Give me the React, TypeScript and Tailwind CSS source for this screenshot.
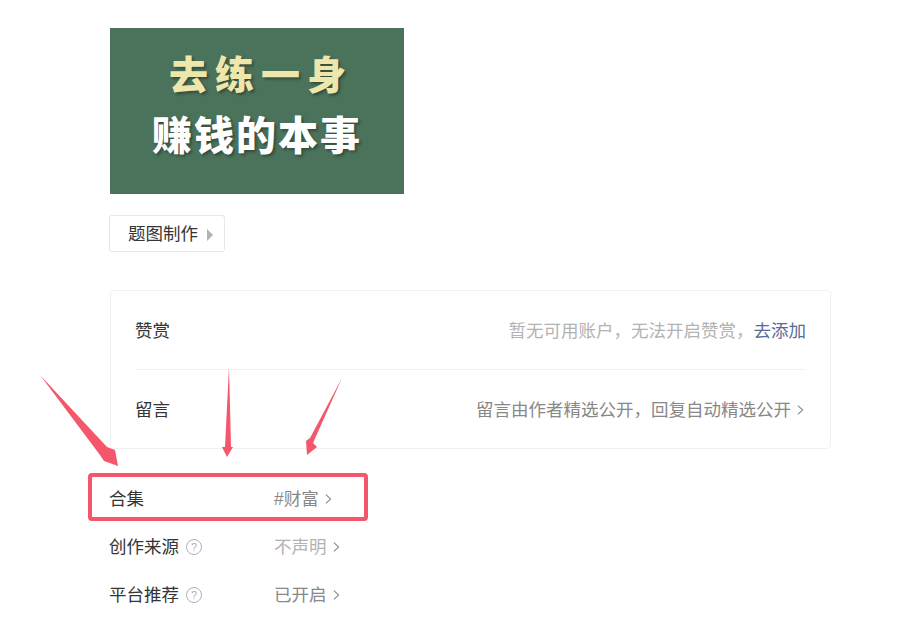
import React from 'react';

const Chevron = ({ className = '' }: { className?: string }) => (
  <svg viewBox="0 0 8 12" className={`w-[7px] h-[12px] ${className}`} fill="none" stroke="currentColor" strokeWidth="1.2">
    <path d="M1 1l5.5 5L1 11" />
  </svg>
);

const Help = () => (
  <span className="ml-[7px] w-[16px] h-[16px] rounded-full border border-[#b2b2b2] text-[#b2b2b2] text-[11px] leading-[14px] text-center">?</span>
);

const Row = ({ label, help, value, dim }: { label: string; help?: boolean; value: string; dim?: boolean }) => (
  <div className="flex items-center h-[48px] pt-[2px]">
    <div className="w-[165px] flex items-center text-[#353535]">
      {label}
      {help && <Help />}
    </div>
    <div className={`flex items-center gap-[6px] ${dim ? 'text-[#b2b2b2]' : 'text-[#888888]'}`}>
      {value}
      <Chevron className="text-[#888888]" />
    </div>
  </div>
);

export default function App() {
  return (
    <div className="relative w-[914px] h-[643px] overflow-hidden bg-white pl-[110px] pt-[28px] text-[17.5px] font-['Liberation_Sans','Noto_Sans_CJK_SC',sans-serif]">
      {/* 封面 */}
      <div className="w-[294px] h-[166px] bg-[#4b735b] flex flex-col items-center font-black">
        <div className="mt-[24px] ml-[8px] text-[39px] leading-[48px] tracking-[7px] text-[#efe6ab] [text-shadow:2px_2px_3px_rgba(0,0,0,0.35)]">去练一身</div>
        <div className="mt-[12px] text-[40px] leading-[48px] tracking-[2px] text-white [text-shadow:2px_2px_3px_rgba(0,0,0,0.35)]">赚钱的本事</div>
      </div>

      <div className="mt-[21px] -ml-[1px] w-[116px] h-[37px] border border-[#e7e7e7] rounded-[3px] flex items-center pl-[18px] pt-[2px] gap-[9px] text-[#353535]">
        题图制作
        <span className="w-0 h-0 border-y-[6px] border-y-transparent border-l-[6px] border-l-[#b2b2b2]" />
      </div>

      {/* 赞赏 / 留言 */}
      <div className="mt-[38px] w-[721px] h-[159px] border border-[#f0f0f0] rounded-[4px] px-[24px]">
        <div className="h-[79px] flex items-center justify-between border-b border-[#f2f2f2] pt-[2px]">
          <span className="text-[#353535]">赞赏</span>
          <span className="text-[#b2b2b2]">暂无可用账户，无法开启赞赏，<span className="text-[#576b95]">去添加</span></span>
        </div>
        <div className="h-[78px] flex items-center justify-between pt-[2px]">
          <span className="text-[#353535]">留言</span>
          <span className="flex items-center gap-[6px] mr-[2px] text-[#888888]">
            留言由作者精选公开，回复自动精选公开
            <Chevron />
          </span>
        </div>
      </div>

      <div className="mt-[25px] -ml-[1px]">
        <Row label="合集" value="#财富" />
        <Row label="创作来源" help value="不声明" dim />
        <Row label="平台推荐" help value="已开启" />
      </div>

      {/* 标注 */}
      <div className="absolute left-[88px] top-[473px] w-[280px] h-[48px] border-[4px] border-[#f4566b] rounded-[4px]" />
      <svg className="absolute inset-0 pointer-events-none" width="914" height="643" viewBox="0 0 914 643">
        <g fill="#f4566b">
          <path d="M40 375L107 447L115 450L118 466L104 461L100 455Z" />
          <path d="M229 367L231 447L233 447L227 457L222 447L225 447Z" />
          <path d="M342 378L313 443L317 447L307 455L306 441L310 438Z" />
        </g>
      </svg>
    </div>
  );
}
